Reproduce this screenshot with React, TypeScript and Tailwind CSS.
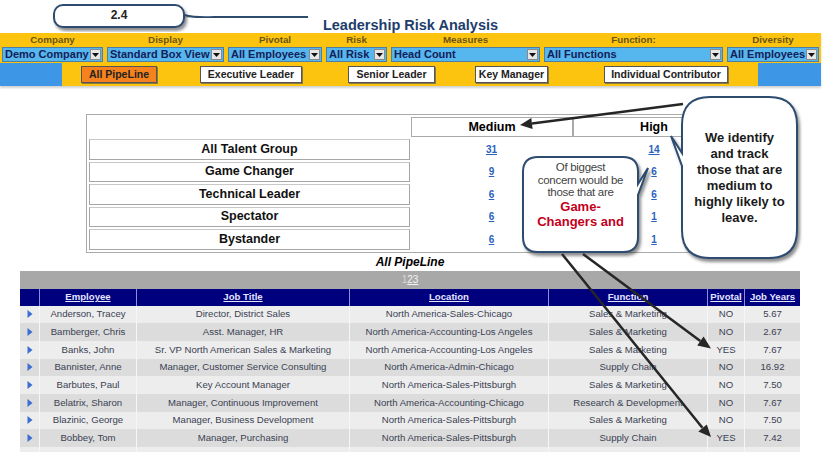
import React from "react";

const rows: string[][] = [
  ["Anderson, Tracey", "Director, District Sales", "North America-Sales-Chicago", "Sales & Marketing", "NO", "5.67"],
  ["Bamberger, Chris", "Asst. Manager, HR", "North America-Accounting-Los Angeles", "Sales & Marketing", "NO", "2.67"],
  ["Banks, John", "Sr. VP North American Sales & Marketing", "North America-Accounting-Los Angeles", "Sales & Marketing", "YES", "7.67"],
  ["Bannister, Anne", "Manager, Customer Service Consulting", "North America-Admin-Chicago", "Supply Chain", "NO", "16.92"],
  ["Barbutes, Paul", "Key Account Manager", "North America-Sales-Pittsburgh", "Sales & Marketing", "NO", "7.50"],
  ["Belatrix, Sharon", "Manager, Continuous Improvement", "North America-Accounting-Chicago", "Research & Development", "NO", "7.67"],
  ["Blazinic, George", "Manager, Business Development", "North America-Sales-Pittsburgh", "Sales & Marketing", "NO", "7.50"],
  ["Bobbey, Tom", "Manager, Purchasing", "North America-Sales-Pittsburgh", "Supply Chain", "YES", "7.42"],
  ["Brennan, Kyle", "Manager, Business Services", "North America-Sales-Pittsburgh", "Supply Chain", "NO", "7.00"],
];

const filters = [
  { label: "Company", value: "Demo Company", w: "w-[101px]" },
  { label: "Display", value: "Standard Box View", w: "w-[117px]" },
  { label: "Pivotal", value: "All Employees", w: "w-[94px]" },
  { label: "Risk", value: "All Risk", w: "w-[61px]" },
  { label: "Measures", value: "Head Count", w: "w-[149px]" },
  { label: "Function:", value: "All Functions", w: "w-[179px]" },
  { label: "Diversity", value: "All Employees", w: "w-[92px]" },
];

const talent = [
  ["All Talent Group", "31", "14"],
  ["Game Changer", "9", "6"],
  ["Technical Leader", "6", "6"],
  ["Spectator", "6", "1"],
  ["Bystander", "6", "1"],
];

function Select({ value }: { value: string }) {
  return (
    <div className="h-[15px] w-full bg-[#56b6ee] border border-[#4d7fa6] flex items-center">
      <span className="flex-1 pl-[2px] text-[11px] font-bold text-[#142058] leading-none whitespace-nowrap overflow-hidden">
        {value}
      </span>
      <span className="w-[11px] h-[11px] mr-[1px] bg-[#e6e6e6] border border-[#8a8a8a] flex items-center justify-center">
        <svg width="7" height="4" viewBox="0 0 7 4">
          <polygon points="0,0 7,0 3.5,4" fill="#111" />
        </svg>
      </span>
    </div>
  );
}

function Btn({ children, w, active }: { children: React.ReactNode; w: string; active?: boolean }) {
  return (
    <div
      className={`${w} h-[17px] border border-[#555] shadow-[1px_1px_0_#8a7a40] flex items-center justify-center text-[10.5px] font-bold text-[#222] whitespace-nowrap ${
        active ? "bg-[#f5821f]" : "bg-white"
      }`}
    >
      {children}
    </div>
  );
}

export default function App() {
  return (
    <div className="relative w-[828px] h-[452px] overflow-hidden bg-white font-['Liberation_Sans',Arial,sans-serif]">
      {/* Title */}
      <div className="h-[33px] w-[821px] flex items-end justify-center pb-[1px]">
        <span className="text-[14.5px] font-bold text-[#1d3d6b] leading-none">Leadership Risk Analysis</span>
      </div>

      {/* Yellow filter bar */}
      <div className="w-[821px] bg-[#fdc40f] shadow-[0_2px_2px_rgba(0,0,0,0.18)]">
        <div className="flex gap-[4px] pl-[2px]">
          {filters.map((f) => (
            <div key={f.label + f.value} className={`${f.w} flex flex-col`}>
              <div className="h-[14px] flex items-center justify-center text-[9.8px] font-bold text-[#6b5410] leading-none whitespace-nowrap">
                {f.label}
              </div>
              <Select value={f.value} />
            </div>
          ))}
        </div>
        <div className="h-[23px] mt-[1px] flex items-center">
          <div className="w-[62px] h-full bg-[#3d97e6]" />
          <div className="ml-[19px]">
            <Btn w="w-[76px]" active>
              All PipeLine
            </Btn>
          </div>
          <div className="ml-[43px]">
            <Btn w="w-[102px]">Executive Leader</Btn>
          </div>
          <div className="ml-[46px]">
            <Btn w="w-[87px]">Senior Leader</Btn>
          </div>
          <div className="ml-[40px]">
            <Btn w="w-[73px]">Key Manager</Btn>
          </div>
          <div className="ml-[56px]">
            <Btn w="w-[124px]">Individual Contributor</Btn>
          </div>
          <div className="ml-[30px] w-[63px] h-full bg-[#3d97e6]" />
        </div>
      </div>

      {/* Talent group table */}
      <div className="mt-[28px] ml-[86px] w-[652px] border border-[#aaaaaa] p-[2px] flex flex-col gap-[2px]">
        <div className="h-[20px] flex">
          <div className="w-[321px]" />
          <div className="ml-[1px] w-[162px] border border-[#aaaaaa] flex items-center justify-center text-[12.5px] font-bold text-black">
            Medium
          </div>
          <div className="w-[162px] border border-[#aaaaaa] flex items-center justify-center text-[12.5px] font-bold text-black">
            High
          </div>
        </div>
        {talent.map((t) => (
          <div key={t[0]} className="h-[20.5px] flex">
            <div className="w-[321px] border border-[#a6a6a6] border-t-[#c8c8c8] flex items-center justify-center text-[12.5px] font-bold text-[#111]">
              {t[0]}
            </div>
            <div className="w-[163px] flex items-center justify-center">
              <span className="text-[10px] font-bold text-[#2a62bd] underline">{t[1]}</span>
            </div>
            <div className="w-[162px] flex items-center justify-center">
              <span className="text-[10px] font-bold text-[#2a62bd] underline">{t[2]}</span>
            </div>
          </div>
        ))}
      </div>

      {/* Pipeline title */}
      <div className="ml-[20px] w-[780px] h-[18px] flex items-center justify-center text-[12px] font-bold italic text-black">
        All PipeLine
      </div>
      <div className="ml-[20px] w-[780px] h-[18px] bg-[#a8a8a8] flex items-center justify-center text-[10px] leading-none">
        <span className="text-[#d8d8d8]">1</span>
        <span className="text-[#f4f4f4] underline">2</span>
        <span className="text-[#f4f4f4] underline">3</span>
      </div>

      {/* Employee table */}
      <div className="ml-[20px] w-[780px] bg-[#f6f6f6]">
        <div className="grid grid-cols-[19px_96px_212px_198px_158px_36px_55px] gap-x-px h-[17px] bg-[#8790d8]">
          <div className="bg-[#00007f]" />
          {["Employee", "Job Title", "Location", "Function", "Pivotal", "Job Years"].map((h) => (
            <div
              key={h}
              className="bg-[#00007f] flex items-center justify-center text-[9.6px] font-bold text-[#e4e4ff] underline whitespace-nowrap"
            >
              {h}
            </div>
          ))}
        </div>
        {rows.map((r, i) => (
          <div key={r[0]} className="grid grid-cols-[19px_96px_212px_198px_158px_36px_55px] gap-x-px h-[17.7px]">
            <div className={`${i % 2 === 0 ? "bg-[#ededed]" : "bg-[#dcdcdc]"} flex items-center justify-center`}>
              <svg width="6" height="8" viewBox="0 0 6 8">
                <polygon points="0.5,0 5.5,4 0.5,8" fill="#3a6ed0" />
              </svg>
            </div>
            {r.map((c, j) => (
              <div
                key={j}
                className={`${i % 2 === 0 ? "bg-[#ededed]" : "bg-[#dcdcdc]"} flex items-center justify-center text-[9.6px] text-[#3a4152] whitespace-nowrap overflow-hidden`}
              >
                {c}
              </div>
            ))}
          </div>
        ))}
      </div>

      {/* Annotation overlay */}
      <svg className="absolute left-0 top-0 pointer-events-none" width="828" height="452" viewBox="0 0 828 452">
        <defs>
          <filter id="sh" x="-20%" y="-20%" width="140%" height="140%">
            <feDropShadow dx="2" dy="3" stdDeviation="1.6" floodColor="#333" floodOpacity="0.55" />
          </filter>
        </defs>
        {/* 2.4 bubble */}
        <path d="M 184 15 Q 196 18 214 17 L 308 17" stroke="#2d4b70" strokeWidth="2" fill="none" filter="url(#sh)" />
        <rect x="54" y="5" width="130" height="22" rx="9" fill="white" stroke="#2d4b70" strokeWidth="2" filter="url(#sh)" />

        {/* Arrows */}
        <g stroke="#262626" strokeWidth="2.5" fill="#262626">
          <line x1="683" y1="104" x2="532" y2="123.5" />
          <polygon points="520,125 531.3,118 532.6,129" stroke="none" />
          <line x1="583" y1="254" x2="700.3" y2="341" />
          <polygon points="711,348.5 697.2,345.5 703.6,336.6" stroke="none" />
          <line x1="562" y1="254" x2="702.4" y2="427.7" />
          <polygon points="711,437 698.3,431.4 706.8,424.4" stroke="none" />
        </g>

        {/* Small callout */}
        <path
          d="M 538 157 H 623 Q 638 157 638 172 V 184 L 648 168 L 638 195 V 237 Q 638 252 623 252 H 538 Q 523 252 523 237 V 172 Q 523 157 538 157 Z"
          fill="white"
          stroke="#2d4b70"
          strokeWidth="2"
          filter="url(#sh)"
        />
        {/* Large callout */}
        <path
          d="M 710 97 H 769 Q 797 97 797 125 V 230 Q 797 258 769 258 H 710 Q 682 258 682 230 V 166 L 671 136 L 682 153 V 125 Q 682 97 710 97 Z"
          fill="white"
          stroke="#2d4b70"
          strokeWidth="2"
          filter="url(#sh)"
        />
      </svg>

      {/* Callout texts */}
      <div className="absolute left-[54px] top-[5px] w-[130px] h-[22px] flex items-center justify-center pb-[3px] text-[12px] font-bold text-[#222]">
        2.4
      </div>
      <div className="absolute left-[523px] top-[161px] w-[115px] text-center">
        <div className="text-[11.5px] leading-[12.6px] text-[#444] tracking-[-0.3px]">
          Of biggest
          <br />
          concern would be
          <br />
          those that are
        </div>
        <div className="text-[13px] leading-[15px] font-bold text-[#c4001c]">
          Game-
          <br />
          Changers and
        </div>
      </div>
      <div className="absolute left-[682px] top-[130px] w-[115px] text-center text-[13px] leading-[16px] font-bold text-[#1a1a1a]">
        We identify
        <br />
        and track
        <br />
        those that are
        <br />
        medium to
        <br />
        highly likely to
        <br />
        leave.
      </div>
    </div>
  );
}
